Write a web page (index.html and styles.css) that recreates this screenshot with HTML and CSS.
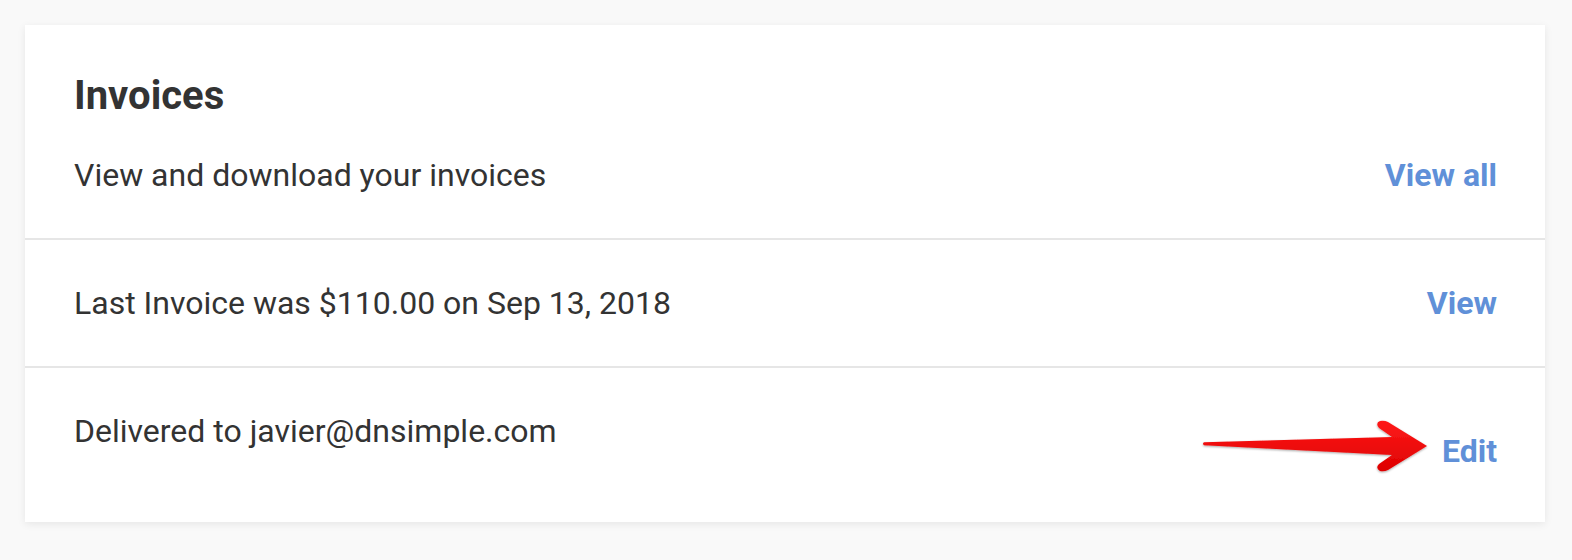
FILE: index.html
```html
<!DOCTYPE html>
<html>
<head>
<meta charset="utf-8">
<link rel="stylesheet" href="styles.css">
</head>
<body>
<div class="page">
  <div class="card">
    <div class="section head">
      <h2 class="title">Invoices</h2>
      <div class="row">
        <span class="text">View and download your invoices</span>
        <a class="link">View all</a>
      </div>
    </div>
    <div class="section mid">
      <div class="row">
        <span class="text">Last Invoice was $110.00 on Sep 13, 2018</span>
        <a class="link">View</a>
      </div>
    </div>
    <div class="section last">
      <div class="row top">
        <span class="text">Delivered to javier@dnsimple.com</span>
        <span class="edit-wrap">
          <svg class="arrow" width="240" height="62" viewBox="0 0 240 62">
            <defs>
              <linearGradient id="rg" x1="0" y1="0" x2="0" y2="1">
                <stop offset="0" stop-color="#ff1a1a"/>
                <stop offset="1" stop-color="#dd0000"/>
              </linearGradient>
              <filter id="sh" x="-10%" y="-20%" width="120%" height="150%">
                <feDropShadow dx="0" dy="1" stdDeviation="0.8" flood-color="#000" flood-opacity="0.35"/>
              </filter>
            </defs>
            <path filter="url(#sh)" fill="url(#rg)" d="M 8 27.3 L 196 22 L 183 13 Q 179 8 184 6 Q 188 5 192 7 L 231 31 L 192 55 Q 188 57 184 56 Q 179 53 183 49 L 196 40 L 8 30.2 Q 6 28.75 8 27.3 Z"/>
          </svg>
          <a class="link">Edit</a>
        </span>
      </div>
    </div>
  </div>
</div>
</body>
</html>
```
FILE: styles.css
```css
html, body {
  margin: 0;
  padding: 0;
  background: #f9f9f9;
}
body {
  font-family: Roboto, "Liberation Sans", sans-serif;
  color: #333333;
}
.page {
  padding: 25px 27px 38px 25px;
}
.card {
  width: 1520px;
  background: #ffffff;
  box-shadow: 0 2px 8px rgba(0, 0, 0, 0.08);
}
.section {
  padding: 0 48px 0 49px;
  border-bottom: 2px solid #e6e6e6;
}
.section.last {
  border-bottom: none;
}
.head {
  padding-top: 48px;
  padding-bottom: 43px;
}
.title {
  margin: 0 0 36px 0;
  font-size: 40px;
  line-height: 46px;
  font-weight: 700;
  color: #333333;
}
.row {
  display: flex;
  justify-content: space-between;
  align-items: center;
}
.row.top {
  align-items: flex-start;
}
.text {
  font-size: 32px;
  line-height: 40px;
}
.link {
  font-size: 32px;
  line-height: 40px;
  font-weight: 700;
  color: #6090d8;
  cursor: pointer;
}
.mid {
  padding-top: 43px;
  padding-bottom: 43px;
}
.last {
  padding-top: 43px;
  padding-bottom: 51px;
}
.edit-wrap {
  position: relative;
  margin-top: 20px;
  display: block;
}
.arrow {
  position: absolute;
  left: -246px;
  top: -16px;
}
```
